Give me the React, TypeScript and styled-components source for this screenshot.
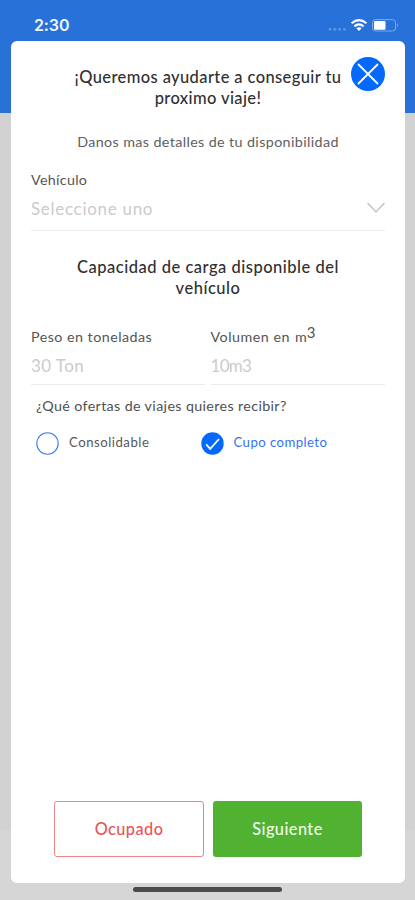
import React from "react";
import styled, { createGlobalStyle } from "styled-components";

const GlobalStyle = createGlobalStyle`
  * { box-sizing: border-box; }
  body { margin: 0; background: #d2d2d2; font-family: Lato, "Open Sans", sans-serif; }
  button { font: inherit; padding: 0; cursor: pointer; }
`;

const Screen = styled.div`
  width: 415px;
  height: 900px;
  display: flex;
  flex-direction: column;
  overflow: hidden;
  background: linear-gradient(#2871d8 0 113px, #d2d2d2 113px 830px, #d6d6d6 830px);
`;

const StatusBar = styled.header`
  height: 41px;
  flex: none;
  display: flex;
  justify-content: space-between;
  padding: 15px 16px 0 34px;
`;

const Clock = styled.span`
  font: 600 16px/21px Inter, sans-serif;
  letter-spacing: -0.1px;
  color: #edf5ff;
`;

const StatusIcons = styled.svg`
  width: 74px;
  height: 20px;
`;

const Card = styled.main`
  width: 394px;
  height: 842px;
  margin-left: 11px;
  flex: none;
  display: flex;
  flex-direction: column;
  padding: 0 20px 26px;
  border-radius: 6px;
  background: #fff;
`;

const Header = styled.div`
  height: 90px;
  display: grid;
  grid-template-columns: 34px 1fr 34px;
  align-items: start;
  padding-top: 16px;
`;

const Heading = styled.h2<{ $spacing: number; $top?: number }>`
  grid-column: 2;
  margin: ${(p) => p.$top ?? 0}px 0 0;
  font-size: 16.5px;
  line-height: 20.5px;
  font-weight: 500;
  letter-spacing: ${(p) => p.$spacing}px;
  text-align: center;
  white-space: nowrap;
  justify-self: center;
  color: #303030;
`;

const CloseButton = styled.button`
  width: 34px;
  height: 34px;
  border: 0;
  background: none;
  svg { display: block; }
`;

const Intro = styled.p`
  margin: 0;
  height: 22px;
  font-size: 14.3px;
  line-height: 22px;
  letter-spacing: 0.38px;
  text-align: center;
  color: #606060;
`;

const Field = styled.label<{ $height?: number }>`
  display: flex;
  flex-direction: column;
  height: ${(p) => p.$height ?? 62}px;
  border-bottom: 1.5px solid #ebebeb;
`;

const FieldLabel = styled.span<{ $spacing?: number }>`
  height: 22px;
  font-size: 14.3px;
  line-height: 22px;
  letter-spacing: ${(p) => p.$spacing ?? 0.3}px;
  color: #555;
  white-space: nowrap;
`;

const Cubic = styled.span`
  margin-left: 5px;
  letter-spacing: 0;
  sup { font-size: 15px; line-height: 0; vertical-align: 4px; }
`;

const FieldValue = styled.span<{ $spacing: number }>`
  height: 34px;
  display: flex;
  align-items: center;
  justify-content: space-between;
  font-size: 17px;
  letter-spacing: ${(p) => p.$spacing}px;
  color: #cbcbcb;
`;

const VehicleSection = styled.section`
  margin-top: 16px;
`;

const CapacityTitle = styled.div`
  display: flex;
  justify-content: center;
  margin-top: 26px;
  height: 42px;
`;

const Measures = styled.div`
  display: grid;
  grid-template-columns: 174px 174px;
  gap: 5.5px;
  margin-top: 27px;
`;

const Question = styled.p`
  margin: 10px 0 0 5px;
  font-size: 14.3px;
  line-height: 22px;
  letter-spacing: 0.36px;
  color: #505050;
`;

const Options = styled.div`
  display: grid;
  grid-template-columns: 164.5px 1fr;
  margin: 15px 0 0 5px;
`;

const Option = styled.div<{ $selected?: boolean; $spacing: number }>`
  display: flex;
  align-items: center;
  gap: 10px;
  height: 24px;
  padding-bottom: 1px;
  font-size: 13.2px;
  letter-spacing: ${(p) => p.$spacing}px;
  color: ${(p) => (p.$selected ? "#3474f4" : "#585858")};
  svg { display: block; }
`;

const OptionLabel = styled.span`
  padding-bottom: 3px;
`;

const Actions = styled.div`
  display: flex;
  gap: 9px;
  margin: auto 0 0 23px;
`;

const ActionButton = styled.button<{ $primary?: boolean }>`
  width: ${(p) => (p.$primary ? 149 : 150)}px;
  height: 56px;
  padding-bottom: 1px;
  border-radius: 3px;
  border: ${(p) => (p.$primary ? "0" : "1.5px solid #ee8388")};
  background: ${(p) => (p.$primary ? "#51b231" : "#fff")};
  color: ${(p) => (p.$primary ? "#f2fbef" : "#e7555a")};
  font-size: 16.3px;
  font-weight: 500;
  letter-spacing: 0.45px;
`;

const HomeIndicator = styled.div`
  width: 149px;
  height: 5px;
  margin: 4px 0 0 133px;
  border-radius: 3px;
  background: #4b4b4b;
`;

export default function App() {
  return (
    <>
      <GlobalStyle />
      <Screen>
        <StatusBar>
          <Clock>2:30</Clock>
          <StatusIcons viewBox="325 15 74 20">
            <g fill="#6097e6">
              <circle cx="330" cy="29.3" r="1.4" />
              <circle cx="334.8" cy="29.3" r="1.4" />
              <circle cx="339.6" cy="29.3" r="1.4" />
              <circle cx="344.4" cy="29.3" r="1.4" />
            </g>
            <g fill="none" stroke="#fff" strokeWidth="2.1">
              <path d="M351.6 23.3Q359 17 366.4 23.3" />
              <path d="M354.4 26.4Q359 22.4 363.6 26.4" />
            </g>
            <path d="M359 30.9l-2.6-2.7q2.6-2.1 5.2 0z" fill="#fff" />
            <rect x="372.5" y="19.6" width="23" height="11.4" rx="3" fill="none" stroke="#7eabed" />
            <rect x="374" y="21" width="11.5" height="8.7" rx="1.3" fill="#fff" />
            <path d="M397 23.3q1.8 1.7 0 4z" fill="#8bb4ef" />
          </StatusIcons>
        </StatusBar>
        <Card>
          <Header>
            <Heading $spacing={0.39} $top={10}>
              ¡Queremos ayudarte a conseguir tu
              <br />
              proximo viaje!
            </Heading>
            <CloseButton aria-label="Cerrar">
              <svg width="34" height="34" viewBox="0 0 34 34">
                <circle cx="17" cy="17" r="17" fill="#0468fb" />
                <path d="M7.5 7.5l19 19M26.5 7.5l-19 19" stroke="#fff" strokeWidth="1.8" strokeLinecap="round" />
              </svg>
            </CloseButton>
          </Header>
          <Intro>Danos mas detalles de tu disponibilidad</Intro>
          <VehicleSection>
            <Field>
              <FieldLabel>Vehículo</FieldLabel>
              <FieldValue $spacing={0.7}>
                Seleccione uno
                <svg width="18" height="12" viewBox="0 0 18 12">
                  <path d="M.5 1L9 10l8.500-9" fill="none" stroke="#bdbdbd" strokeWidth="1.2" />
                </svg>
              </FieldValue>
            </Field>
          </VehicleSection>
          <CapacityTitle>
            <Heading $spacing={0.5}>
              Capacidad de carga disponible del
              <br />
              vehículo
            </Heading>
          </CapacityTitle>
          <Measures>
            <Field $height={59}>
              <FieldLabel $spacing={0.46}>Peso en toneladas</FieldLabel>
              <FieldValue $spacing={0.4}>30 Ton</FieldValue>
            </Field>
            <Field $height={59}>
              <FieldLabel $spacing={0.5}>
                Volumen en<Cubic>m<sup>3</sup></Cubic>
              </FieldLabel>
              <FieldValue $spacing={-0.7}>10m3</FieldValue>
            </Field>
          </Measures>
          <Question>¿Qué ofertas de viajes quieres recibir?</Question>
          <Options role="radiogroup">
            <Option role="radio" aria-checked={false} $spacing={0.5}>
              <svg width="23" height="23" viewBox="0 0 23 23">
                <circle cx="11.500" cy="11.500" r="10.700" fill="#fff" stroke="#3e7df5" strokeWidth="1.1" />
              </svg>
              <OptionLabel>Consolidable</OptionLabel>
            </Option>
            <Option role="radio" aria-checked $selected $spacing={0.42}>
              <svg width="23" height="23" viewBox="0 0 23 23">
                <circle cx="11.500" cy="11.500" r="11.200" fill="#0468fb" />
                <path d="M5.200 12.300l4 4.500L18 7" fill="none" stroke="#fff" strokeWidth="1.800" />
              </svg>
              <OptionLabel>Cupo completo</OptionLabel>
            </Option>
          </Options>
          <Actions>
            <ActionButton>Ocupado</ActionButton>
            <ActionButton $primary>Siguiente</ActionButton>
          </Actions>
        </Card>
        <HomeIndicator />
      </Screen>
    </>
  );
}
